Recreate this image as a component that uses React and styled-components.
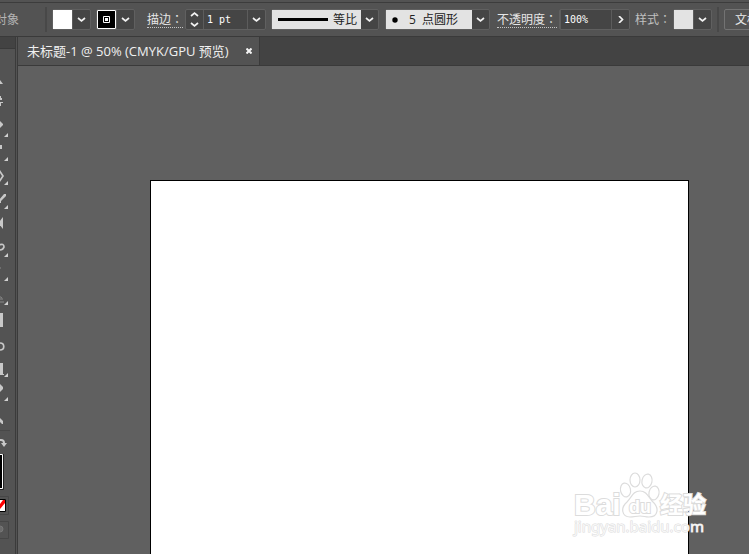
import styled, { createGlobalStyle } from 'styled-components';

const tools = [
    { name: '选择', d: 'M0 12 L3 16 H-1 Z' },
    { name: '魔棒', d: 'M-2 4 H1 V6 H2 V8 H0 V10 H3 V11 H1 V14 H-2 Z' },
    { name: '钢笔', d: 'M0 5 L3 8 V9 L0 12 Z', more: true },
    { name: '文字', d: 'M-2 5 H2 V9 H-2 Z', more: true },
    { name: '形状', d: 'M-1 6 L3 12 L-1 18', outline: true, more: true },
    { name: '画笔', d: 'M-1 12 L4 6 H6 V8 L1 13 V15 H-1 Z', more: true },
    { name: '橡皮擦', d: 'M3 5 V17 L-1 12 V10 Z' },
    { name: '旋转', d: 'M-1 9 Q4 7 4 11 Q3 14 0 14', outline: true, more: true },
    { name: '宽度', d: 'M-1 8 H1', faint: true, more: true },
    { name: '透视网格', d: 'M-1 12 L2 14 M-1 15 H3 M-1 18 H4', faint: true, more: true },
    { name: '渐变', d: 'M-1 5 H3 V19 H-1 Z' },
    { name: '混合', d: 'M-1 11 H0 C5 11 5 18 0 18', outline: true },
    { name: '图表', d: 'M-1 7 H3 V18 H4 V19 H-1 Z', more: true },
    { name: '切片', d: 'M0 4 L3 7 V9 L0 12 Z', more: true },
    { name: '缩放', d: 'M-1 13 L3 17 V20 H2 L-1 17 Z' },
];

function Chevron({ direction = 'down' }) {
    const paths = {
        down: 'M1 2 L4.5 5 L8 2',
        up: 'M1 5 L4.5 2 L8 5',
        right: 'M3 0 L6.5 3.5 L3 7',
    };
    return (
        <svg width="9" height="7" viewBox="0 0 9 7" fill="none" stroke="#f2f2f2" strokeWidth="1.7" aria-hidden="true">
            <path d={paths[direction]} />
        </svg>
    );
}

function Tool({ tool }) {
    const lined = tool.outline || tool.faint;
    return (
        <ToolButton type="button" aria-label={tool.name}>
            <svg width="15" height="24" viewBox="0 0 15 24" aria-hidden="true">
                <path
                    d={tool.d}
                    fill={lined ? 'none' : '#c8c8c8'}
                    stroke={lined ? (tool.faint ? '#8a8a8a' : '#c8c8c8') : 'none'}
                    strokeWidth={tool.faint ? 1 : 1.7}
                />
                {tool.more && <path d="M8 17 V21 H4 Z" fill="#d0d0d0" />}
            </svg>
        </ToolButton>
    );
}

function ControlBar() {
    return (
        <Bar>
            <Target>对象</Target>
            <Divider />
            <Field>
                <Combo>
                    <Swatch type="button" aria-label="填色" $color="#ffffff" />
                    <CaretButton type="button" aria-label="填色选项"><Chevron /></CaretButton>
                </Combo>
            </Field>
            <Field>
                <Combo>
                    <Swatch type="button" aria-label="描边颜色" $color="#000000">
                        <svg width="19" height="19" viewBox="0 0 19 19" aria-hidden="true">
                            <path d="M.5 .5 H18.5 V18.5 H.5 Z M6.5 6.5 H12.5 V12.5 H6.5 Z" fill="none" stroke="#fff" />
                            <path d="M8 8 H11 V11 H8 Z" fill="#fff" />
                        </svg>
                    </Swatch>
                    <CaretButton type="button" aria-label="描边颜色选项"><Chevron /></CaretButton>
                </Combo>
            </Field>
            <Field $before={12}>
                <Label htmlFor="weight" $dotted>描边：</Label>
                <Combo>
                    <Stepper>
                        <StepButton type="button" aria-label="增加"><Chevron direction="up" /></StepButton>
                        <StepButton type="button" aria-label="减少"><Chevron /></StepButton>
                    </Stepper>
                    <ValueInput id="weight" defaultValue="1 pt" $width={44} />
                    <CaretButton type="button" aria-label="描边粗细选项"><Chevron /></CaretButton>
                </Combo>
            </Field>
            <Field>
                <Combo>
                    <Preview>
                        <svg width="50" height="3" aria-hidden="true"><rect width="50" height="3" /></svg>
                        <Select aria-label="变量宽度配置文件" $width={33}>
                            <option>等比</option>
                        </Select>
                    </Preview>
                    <Caret><Chevron /></Caret>
                </Combo>
            </Field>
            <Field $before={6}>
                <Combo>
                    <Preview>
                        <svg width="6" height="6" aria-hidden="true"><circle cx="3" cy="3" r="2.7" /></svg>
                        <Select aria-label="画笔定义" $width={74} $indent={11}>
                            <option>5{'\u2002'}点圆形</option>
                        </Select>
                    </Preview>
                    <Caret><Chevron /></Caret>
                </Combo>
            </Field>
            <Field $before={7}>
                <Label htmlFor="opacity" $dotted>不透明度：</Label>
                <Combo>
                    <ValueInput id="opacity" defaultValue="100%" $width={51} />
                    <CaretButton type="button" aria-label="不透明度选项"><Chevron direction="right" /></CaretButton>
                </Combo>
            </Field>
            <Field>
                <Label as="span">样式：</Label>
                <Combo>
                    <Swatch type="button" aria-label="图形样式" $color="#e3e3e3" />
                    <CaretButton type="button" aria-label="图形样式选项"><Chevron /></CaretButton>
                </Combo>
            </Field>
            <Field>
                <Divider />
                <SetupButton type="button">文档设置</SetupButton>
            </Field>
        </Bar>
    );
}

function Toolbox() {
    return (
        <Rail>
            <RailHeader />
            <ToolList>
                {tools.map((tool) => (
                    <Tool key={tool.name} tool={tool} />
                ))}
            </ToolList>
            <ColorTools>
                <svg width="15" height="119" viewBox="0 0 15 119" aria-hidden="true">
                    <path d="M0 .5 H10" stroke="#484848" />
                    <path d="M-1 10 H1 Q4 10 4 13" fill="none" stroke="#c8c8c8" strokeWidth="2" />
                    <path d="M1 13 H7 L4 17 Z" fill="#c8c8c8" />
                    <path d="M-3 24.5 H2.5 V58.5 H-3 Z" fill="#000" stroke="#fff" />
                    <path d="M3.5 24 V59.5 H-1" fill="none" stroke="#222" />
                    <path d="M-1 66.5 H8.5 V84.5 H-1 M-1 91.5 H8.5 V108.5 H-1" fill="none" stroke="#464646" />
                    <path d="M-1 69.5 H5.5 V81.5 H-1 Z" fill="#fff" stroke="#000" />
                    <path d="M0 74 L3 70 H5 V73 L0 79 Z" fill="#f00" />
                    <circle cx="0" cy="99" r="3" fill="#6b6b6b" stroke="#777" />
                </svg>
            </ColorTools>
        </Rail>
    );
}

function Watermark() {
    return (
        <Mark width="150" height="72" viewBox="0 0 150 72" role="img" aria-label="Baidu 经验">
            <g fill="#fff" stroke="#dcdcdc" strokeWidth="1.2">
                <ellipse cx="65" cy="12" rx="5" ry="7" />
                <ellipse cx="77" cy="13" rx="5" ry="7" transform="rotate(12 77 13)" />
                <ellipse cx="55.5" cy="22" rx="5" ry="7" transform="rotate(-12 55.5 22)" />
                <ellipse cx="84" cy="25" rx="5" ry="7" transform="rotate(12 84 25)" />
                <path d="M70 23 C76 23 78 28 82 33 C90 40 88 49 79 49 C75 49 74 48 70 48 C66 48 64 49 60 49 C52 49 50 40 57 34 C62 29 63 23 70 23 Z" />
            </g>
            <g fontFamily="'Liberation Sans', sans-serif" fontWeight="bold" fill="#fff" stroke="#dcdcdc" strokeWidth="2" paintOrder="stroke">
                <text x="4" y="47" fontSize="30">Bai</text>
                <text x="59" y="45" fontSize="18">du</text>
                <text x="90" y="45" fontSize="23" fontFamily="'Noto Sans CJK SC', sans-serif">经验</text>
            </g>
            <text x="4" y="64" fontFamily="'Noto Sans', sans-serif" fontSize="15" fill="#f7f7f7" stroke="#dcdcdc" paintOrder="stroke">
                jingyan.baidu.com
            </text>
        </Mark>
    );
}

export default function App() {
    return (
        <Window>
            <GlobalStyle />
            <ControlBar />
            <Body>
                <Toolbox />
                <Workspace>
                    <Tabs>
                        <Tab>
                            未标题-1 @ 50% (CMYK/GPU 预览)
                            <CloseButton type="button" aria-label="关闭">
                                <svg width="6" height="6" viewBox="0 0 6 6" stroke="#f5f5f5" strokeWidth="2" aria-hidden="true">
                                    <path d="M.5 .5 L5.5 5.5 M5.5 .5 L.5 5.5" />
                                </svg>
                            </CloseButton>
                        </Tab>
                    </Tabs>
                    <Canvas>
                        <Artboard />
                    </Canvas>
                </Workspace>
            </Body>
            <Watermark />
        </Window>
    );
}

const GlobalStyle = createGlobalStyle`
    * {
        box-sizing: border-box;
    }
    body {
        margin: 0;
    }
    button, input, select {
        margin: 0;
        padding: 0;
        border: 0;
        border-radius: 0;
        background: none;
        color: inherit;
        font: inherit;
    }
    svg {
        display: block;
        flex-shrink: 0;
    }
`;

const Window = styled.div`
    position: relative;
    display: flex;
    flex-direction: column;
    height: 100vh;
    overflow: hidden;
    background-color: #535353;
    color: #e6e6e6;
    font-family: 'Open Sans', 'Noto Sans CJK JP', sans-serif;
    font-size: 12px;
    line-height: 16px;
`;

const Bar = styled.header`
    display: flex;
    align-items: center;
    flex-shrink: 0;
    height: 35px;
    margin-top: 2px;
    border-top: 1px solid #3c3c3c;
    border-bottom: 1px solid #3a3a3a;
    overflow: hidden;
    & > * {
        flex-shrink: 0;
    }
`;

const Target = styled.span`
    display: flex;
    justify-content: flex-end;
    width: 19px;
    margin-right: 26px;
    color: #b4b4b4;
    white-space: nowrap;
`;

const Divider = styled.span`
    width: 2px;
    height: 25px;
    background-color: #484848;
`;

const Field = styled.div`
    display: flex;
    align-items: center;
    gap: 2px;
    margin-left: ${({ $before = 5 }) => $before}px;
`;

const Label = styled.label`
    padding-top: 1px;
    border-bottom: 1px ${({ $dotted }) => ($dotted ? 'dotted #c4c4c4' : 'solid transparent')};
    color: ${({ $dotted }) => ($dotted ? '#e6e6e6' : '#c0c0c0')};
    line-height: 14px;
`;

const Combo = styled.div`
    display: flex;
    height: 21px;
    border: 1px solid #606060;
    border-radius: 2px;
    background-color: #454545;
`;

const Swatch = styled.button`
    width: 19px;
    background-color: ${({ $color }) => $color};
`;

const CaretButton = styled.button`
    display: flex;
    align-items: center;
    justify-content: center;
    width: 18px;
    border-left: 1px solid #5c5c5c;
`;

const Caret = styled.span`
    display: flex;
    align-items: center;
    justify-content: center;
    width: 17px;
`;

const Stepper = styled.div`
    display: flex;
    flex-direction: column;
    width: 17px;
`;

const StepButton = styled.button`
    display: flex;
    flex: 1;
    align-items: center;
    justify-content: center;
`;

const ValueInput = styled.input`
    width: ${({ $width }) => $width}px;
    padding: 0 3px;
    border-left: 1px solid #5c5c5c;
    color: #ffffff;
    font-family: 'DejaVu Sans Mono', monospace;
    font-size: 10px;
`;

const Preview = styled.div`
    display: flex;
    align-items: center;
    padding-left: 6px;
    background-color: #e3e3e3;
    color: #222222;
`;

const Select = styled.select`
    appearance: none;
    width: ${({ $width }) => $width}px;
    padding-top: 1px;
    padding-left: ${({ $indent = 5 }) => $indent}px;
`;

const SetupButton = styled.button`
    height: 21px;
    margin-left: 3px;
    padding: 0 10px;
    border: 1px solid #737373;
    border-radius: 2px;
    white-space: nowrap;
`;

const Body = styled.div`
    display: flex;
    flex: 1;
    min-height: 0;
`;

const Rail = styled.nav`
    display: flex;
    flex-direction: column;
    flex-shrink: 0;
    width: 18px;
    border-right: 3px double #3b3b3b;
    overflow: hidden;
`;

const RailHeader = styled.div`
    flex-shrink: 0;
    height: 12px;
    border-bottom: 1px solid #3a3a3a;
    background-color: #434343;
`;

const ToolList = styled.div`
    display: flex;
    flex-direction: column;
    padding-top: 19px;
`;

const ToolButton = styled.button`
    height: 24px;
`;

const ColorTools = styled.div`
    padding-top: 2px;
`;

const Workspace = styled.main`
    display: flex;
    flex: 1;
    flex-direction: column;
    min-width: 0;
`;

const Tabs = styled.div`
    display: flex;
    flex-shrink: 0;
    height: 29px;
    border-bottom: 1px solid #3a3a3a;
    background-color: #434343;
`;

const Tab = styled.div`
    display: flex;
    align-items: center;
    padding: 0 7px 0 9px;
    border-right: 1px solid #3a3a3a;
    background-color: #535353;
    color: #f0f0f0;
    font-size: 13px;
    white-space: nowrap;
`;

const CloseButton = styled.button`
    display: flex;
    margin-left: 17px;
`;

const Canvas = styled.div`
    display: flex;
    flex: 1;
    padding: 114px 60px 0 132px;
    background-color: #606060;
`;

const Artboard = styled.div`
    flex: 1;
    border: 1px solid #000000;
    border-bottom: 0;
    background-color: #ffffff;
`;

const Mark = styled.svg`
    position: absolute;
    right: 29px;
    bottom: 14px;
    pointer-events: none;
`;
